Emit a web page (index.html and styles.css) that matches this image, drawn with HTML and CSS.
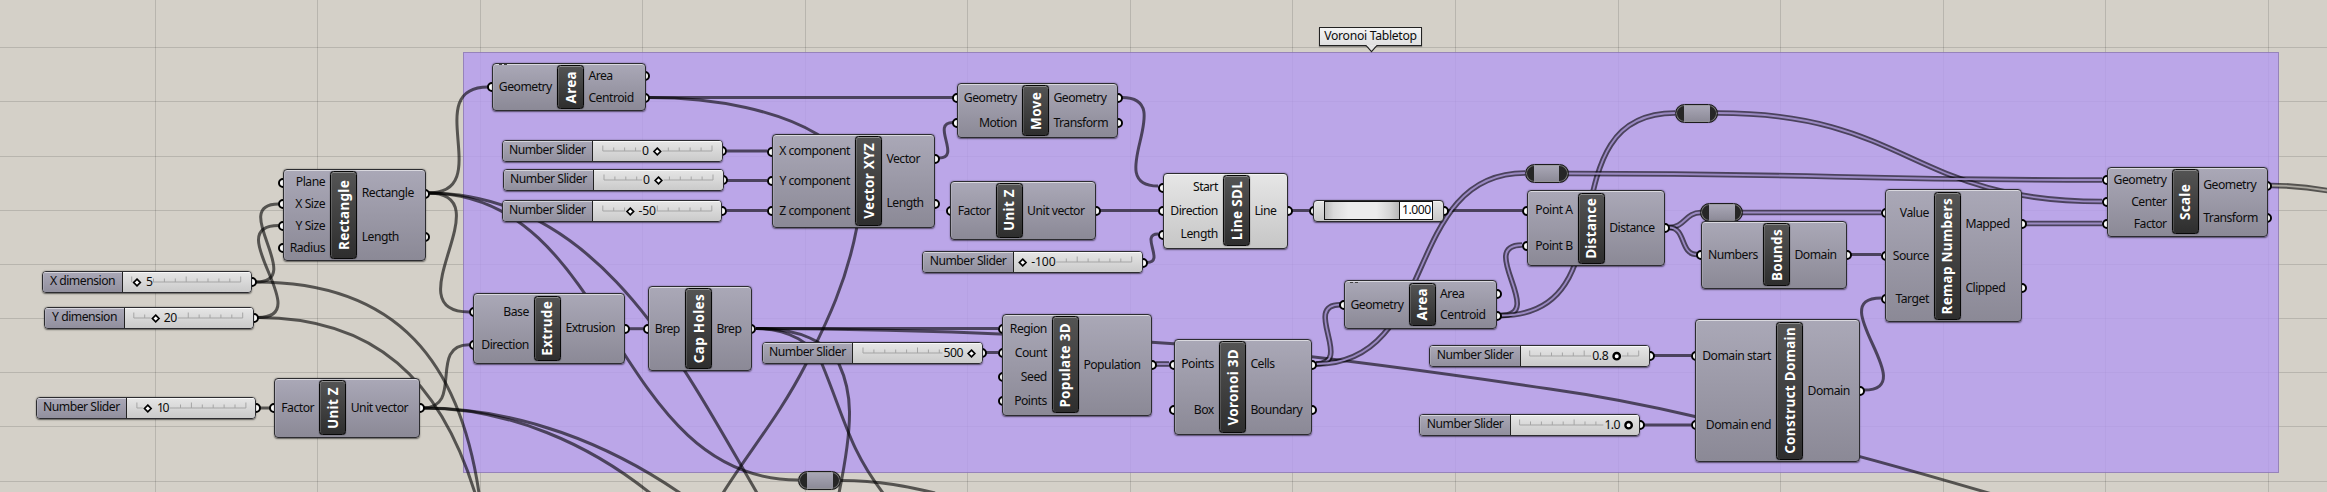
FILE: index.html
```html
<!DOCTYPE html>
<html lang="en">
<head>
<meta charset="utf-8">
<title>Voronoi Tabletop</title>
<link rel="stylesheet" href="styles.css">
</head>
<body>
<main class="canvas" id="canvas">
  <svg class="layer" id="grid" width="2327" height="492"></svg>
  <div class="group"></div>
  <svg class="layer" id="wires" width="2327" height="492"></svg>
  <div class="tag">Voronoi Tabletop
    <svg class="tag-tip" width="13" height="8" viewBox="0 0 13 8"><path d="M1 0L6.5 6.6L12 0" fill="#e4e4e4"/><path d="M.5 .6H1.2L6.5 6.6L11.8 .6H12.5" fill="none" stroke="#222" stroke-width="1.1"/><path d="M1.8 .3H11.2" stroke="#e8e8e8" stroke-width="1.6"/></svg>
  </div>
</main>
<script src="graph.js"></script>
</body>
</html>
```
FILE: styles.css
```css
body {
  margin: 0;
  background: #d4d0c8;
  overflow: hidden;
}
.canvas {
  position: relative;
  width: 2327px;
  height: 492px;
  overflow: hidden;
  font-family: "Noto Sans", "Open Sans", sans-serif;
  font-size: 12.2px;
  letter-spacing: -0.5px;
  color: #0c0c0c;
  white-space: nowrap;
}
.layer { position: absolute; left: 0; top: 0; }
.grid-line { stroke: rgba(0, 0, 0, 0.13); stroke-width: 1; }
.group {
  position: absolute;
  left: 462.5px;
  top: 52px;
  width: 1816px;
  height: 421px;
  box-sizing: border-box;
  background: rgba(182, 156, 239, 0.82);
  border: 1px solid rgba(70, 60, 90, 0.32);
}
.wire { fill: none; stroke: rgba(0, 0, 0, 0.6); stroke-width: 3; }
.wire-list { fill: none; stroke: rgba(0, 0, 0, 0.6); stroke-width: 5.6; }
.wire-core { fill: none; stroke: #9a89c2; stroke-width: 1.8; }
.wire-core.plain { stroke: #aaa7a0; }

.tag {
  position: absolute;
  left: 1319px;
  top: 27px;
  width: 101px;
  height: 17px;
  border: 1px solid #222;
  background: linear-gradient(#f4f4f4, #e0e0e0);
  box-shadow: 0 1px 1px rgba(0, 0, 0, 0.35);
  line-height: 16px;
  letter-spacing: -0.3px;
  text-align: center;
}
.tag-tip { position: absolute; left: 45px; top: 17px; }

.item { position: absolute; }
.port {
  position: absolute;
  width: 6px;
  height: 6px;
  border: 2px solid #000;
  border-radius: 50%;
  background: #fff;
}
.port.in { left: -4.7px; top: calc(50% - 4.7px); }
.port.out { right: -4.7px; top: calc(50% - 4.7px); }

.body {
  position: absolute;
  inset: 0;
  box-sizing: border-box;
  border: 1px solid #2c2c30;
  border-radius: 4px;
  background: linear-gradient(#aaa8b7, #8b8996);
  box-shadow: inset 0 1px 0 rgba(255, 255, 255, 0.55), inset 1px 0 0 rgba(255, 255, 255, 0.15),
    0 0.5px 1.5px rgba(0, 0, 0, 0.55);
}
.light .body { background: linear-gradient(#e6e6e6, #c6c6c6); }
.columns {
  position: relative;
  display: flex;
  height: 100%;
  box-sizing: border-box;
  padding: 2.4px 0;
}
.column { display: flex; flex-direction: column; }
.column.inputs { align-items: stretch; text-align: right; }
.column.outputs { flex: 1; }
.row { flex: 1; display: flex; align-items: center; }
.row span { line-height: 14px; }
.inputs .row { justify-content: flex-end; padding-right: 5.2px; }
.outputs .row { padding-left: 4.4px; }
.title {
  width: 27px;
  box-sizing: border-box;
  flex: none;
  display: flex;
  align-items: center;
  justify-content: center;
  border: 1px solid #080808;
  border-radius: 3.5px;
  background: linear-gradient(#545454, #2e2e2e);
  box-shadow: inset 0 1px 0 #8c8c8c, inset 1px 0 0 rgba(255, 255, 255, 0.15), 0 0 1px #222;
  color: #fff;
  font-size: 13.5px;
  font-weight: 700;
  letter-spacing: 0.3px;
}
.title span { writing-mode: vertical-rl; transform: rotate(180deg); line-height: 18px; }
.mark {
  position: absolute;
  left: 6.5px;
  top: 1.5px;
  width: 8px;
  height: 1px;
  background: linear-gradient(90deg, #444 3px, transparent 3px 5px, #444 5px);
}

.slider .body { display: flex; overflow: hidden; }
.caption {
  flex: none;
  box-sizing: border-box;
  border-right: 1px solid #222;
  text-align: center;
  line-height: 18.5px;
  background: linear-gradient(#aaa8b7, #918f9d);
  box-shadow: inset 0 1px 0 rgba(255, 255, 255, 0.5), inset 1px 0 0 rgba(255, 255, 255, 0.15);
}
.track { flex: 1; background: linear-gradient(#e6e6e6, #cacaca); box-shadow: inset 0 1px 0 #f8f8f8; }
.ticks { position: absolute; left: 0; top: 0; overflow: visible; }
.tick { stroke: #a5a5a5; stroke-width: 1; fill: none; }
.knob { fill: #fff; stroke: #000; stroke-width: 1.7; }
.knob.round { stroke-width: 2.4; }
.value { fill: #0c0c0c; }

.relay {
  box-sizing: border-box;
  width: 43.5px;
  height: 18.5px;
  border: 1px solid #1c1c1c;
  border-radius: 9.5px;
  background: linear-gradient(90deg, #262626 8px, transparent 8px 33.5px, #262626 33.5px),
    linear-gradient(#aaa8b7, #8b8996);
  box-shadow: inset 0 0 0 1px rgba(150, 150, 150, 0.7), 0 0 1px rgba(0, 0, 0, 0.5);
}

.falloff {
  position: absolute;
  left: 10px;
  top: 0.5px;
  width: 109px;
  height: 19px;
  box-sizing: border-box;
  display: flex;
  justify-content: flex-end;
  border: 1px solid #111;
  background: linear-gradient(90deg, #bbb, #dadada 8%, #ececec 22%, #ececec 48%, #d6d6d6 60%, #b4b4b4 70%);
}
.readout {
  width: 33px;
  box-sizing: border-box;
  border-left: 1px solid #111;
  background: #fff;
  text-align: center;
  line-height: 15px;
}
```
FILE: graph.js
```js
const SVG = 'http://www.w3.org/2000/svg';
const canvas = document.getElementById('canvas');

function svg(parent, name, attrs, text) {
  const el = document.createElementNS(SVG, name);
  for (const key in attrs) el.setAttribute(key, attrs[key]);
  if (text) el.textContent = text;
  parent.appendChild(el);
  return el;
}
function div(parent, cls, text, tag) {
  const el = document.createElement(tag || 'div');
  el.className = cls;
  if (text) el.textContent = text;
  parent.appendChild(el);
  return el;
}
function place(el, x, y, w, h) {
  el.style.left = x + 'px';
  el.style.top = y + 'px';
  if (w) { el.style.width = w + 'px'; el.style.height = h + 'px'; }
}

// Grid
const grid = document.getElementById('grid');
[155, 317, 480, 642, 805, 967, 1130, 1292, 1455, 1618, 1780, 1943, 2105, 2268].forEach(x =>
  svg(grid, 'path', { class: 'grid-line', d: `M${x + .5} 0V492` }));
[47, 101, 156, 210, 264, 318, 372, 426, 481].forEach(y =>
  svg(grid, 'path', { class: 'grid-line', d: `M0 ${y + .5}H2327` }));

// Wires: [x1, y1, x2, y2]
const wires = document.getElementById('wires');
function curve([x1, y1, x2, y2]) {
  const c = Math.max(Math.abs(x2 - x1) / 2, Math.abs(y2 - y1) * .65);
  return `M${x1} ${y1}C${x1 + c} ${y1} ${x2 - c} ${y2} ${x2} ${y2}`;
}
[
  [256, 282, 278.5, 204], [258, 317.5, 278.5, 225.5], [260, 408, 270, 408],
  [423, 408, 469, 344.7], [428, 193, 488, 87], [428, 193, 469, 312],
  [428, 193, 798, 480], [649, 97.5, 953, 97.5],
  [727, 151, 767, 151], [727, 180.5, 767, 180.5], [727, 210.5, 767, 210.5],
  [939, 158, 953, 122.5], [1122, 97.5, 1158, 186], [1100, 210.5, 1158, 210.5],
  [1147, 262.5, 1158, 234], [628, 328.7, 643, 328.7], [756, 328.5, 998, 328.5],
  [986, 352.5, 998, 352.5], [1292, 210.5, 1309, 210.5], [1448, 210.5, 1522, 210.5],
  [1654, 355.5, 1691, 355.5], [1644, 425, 1691, 425],
  [1851, 254.5, 1881, 254.5], [1864, 390, 1881, 298]
].map(curve).concat([
  'M256 282C400 282 460 365 479 493',
  'M258 317.5C375 317.5 440 380 475 493',
  'M423 408C520 408 610 445 680 493',
  'M423 408C510 408 590 445 650 493',
  'M428 193C600 193 685 370 757 493',
  'M649 97.5C720 97.5 780 112 817 134C855 156 866 190 856.7 228C845 290 820 335 806 364C780 415 750 450 723 493',
  'M756 328.5C900 328.5 1060 336 1174 343.7C1250 348 1400 367 1550 389C1600 396 1650 406 1695 416.5C1760 430 1860 455 1992 494',
  'M756 328.5C790 328.5 813 344 822 364C845 420 850 450 883 493',
  'M756 328.5C800 328.5 828 342 839 364C852 392 854 420 839 493',
  'M841 480.5C880 480.5 910 487 935 493'
]).forEach(d => svg(wires, 'path', { class: 'wire', d }));

[
  [1156, 364, 1169, 364], [1316, 364, 1340, 304.7], [1316, 364, 1525, 173],
  [1501, 315.5, 1522, 245], [1501, 315.5, 1675, 113], [1717, 113, 2102, 201.5],
  [1568, 173.5, 2102, 180], [1669, 227.5, 1701, 212.5], [1669, 227.5, 1697, 254.5],
  [1742, 212.5, 1881, 212.5], [2026, 223.5, 2102, 223.5]
].map(curve).forEach(d => {
  svg(wires, 'path', { class: 'wire-list', d });
  svg(wires, 'path', { class: 'wire-core', d });
});
const exit = 'M2271 185.5C2295 185.5 2315 188 2332 191.5';
svg(wires, 'path', { class: 'wire-list', d: exit });
svg(wires, 'path', { class: 'wire-core plain', d: exit });

// Relays
[[1674.5, 104], [1525, 164], [1699.7, 203], [797.7, 471]].forEach(([x, y]) =>
  place(div(canvas, 'item relay'), x, y));

// Components: x, y, right, bottom, title x, title, inputs, outputs
[
  [283, 169, 425.5, 261, 330.3, 'Rectangle', ['Plane', 'X Size', 'Y Size', 'Radius'], ['Rectangle', 'Length']],
  [274, 378, 420, 437.5, 319.3, 'Unit Z', ['Factor'], ['Unit vector']],
  [492, 62.5, 645.5, 111, 557, 'Area', ['Geometry'], ['Area', 'Centroid'], 'mark'],
  [771.5, 134, 935, 228, 855, 'Vector XYZ', ['X component', 'Y component', 'Z component'], ['Vector', 'Length']],
  [957, 83, 1118, 138, 1022, 'Move', ['Geometry', 'Motion'], ['Geometry', 'Transform']],
  [950.3, 181, 1096.5, 240, 995.7, 'Unit Z', ['Factor'], ['Unit vector']],
  [1163, 173, 1288, 248.7, 1223, 'Line SDL', ['Start', 'Direction', 'Length'], ['Line'], 'light'],
  [473.3, 293.3, 625, 363.7, 534, 'Extrude', ['Base', 'Direction'], ['Extrusion']],
  [648, 286, 751.7, 371, 685, 'Cap Holes', ['Brep'], ['Brep']],
  [1002.3, 314, 1152.5, 415.7, 1052, 'Populate 3D', ['Region', 'Count', 'Seed', 'Points'], ['Population']],
  [1173.5, 339, 1312, 435, 1219, 'Voronoi 3D', ['Points', 'Box'], ['Cells', 'Boundary']],
  [1343.5, 280.3, 1497.2, 328.8, 1408.7, 'Area', ['Geometry'], ['Area', 'Centroid'], 'mark'],
  [1527, 190.3, 1665, 266, 1577.8, 'Distance', ['Point A', 'Point B'], ['Distance']],
  [1701, 221, 1847.3, 288.8, 1763, 'Bounds', ['Numbers'], ['Domain']],
  [1885.3, 189.3, 2022, 322.5, 1934, 'Remap Numbers', ['Value', 'Source', 'Target'], ['Mapped', 'Clipped']],
  [1695.2, 319.3, 1860, 462, 1776.2, 'Construct Domain', ['Domain start', 'Domain end'], ['Domain']],
  [2106.6, 166.5, 2267.8, 236.8, 2171.8, 'Scale', ['Geometry', 'Center', 'Factor'], ['Geometry', 'Transform']]
].forEach(([x, y, r, b, tx, name, ins, outs, kind]) => {
  const node = div(canvas, 'item node ' + (kind === 'light' ? 'light' : ''));
  place(node, x, y, r - x, b - y);
  const inner = b - y - 4.8;
  const port = (side, i, n) => {
    div(node, 'port ' + side).style.top = (2.4 + inner * (i + .5) / n - 4.7) + 'px';
  };
  ins.forEach((_, i) => port('in', i, ins.length));
  outs.forEach((_, i) => port('out', i, outs.length));
  div(node, 'body');
  if (kind === 'mark') div(node, 'mark');
  const columns = div(node, 'columns');
  const left = div(columns, 'column inputs');
  left.style.width = (tx - x) + 'px';
  ins.forEach(t => div(div(left, 'row'), '', t, 'span'));
  div(div(columns, 'title'), '', name, 'span');
  const right = div(columns, 'column outputs');
  outs.forEach(t => div(div(right, 'row'), '', t, 'span'));
});

// Sliders: x, y, right, split x, caption, value, value x, value width, knob x, knob shape
[
  [42.3, 270.5, 252, 121.7, 'X dimension', '5', 146.3, 6, 137.3],
  [44.3, 306.5, 254, 123.8, 'Y dimension', '20', 164, 13, 156],
  [35.6, 396.5, 256.5, 126.2, 'Number Slider', '10', 156.5, 12, 147.4],
  [501.5, 139.8, 722.5, 592, 'Number Slider', '0', 641.6, 6.5, 656.8],
  [502.5, 169.2, 723.5, 593.2, 'Number Slider', '0', 642.6, 6.5, 658],
  [501.5, 199.5, 722.3, 592, 'Number Slider', '-50', 638, 17, 629.8],
  [922.3, 251.3, 1143, 1012.7, 'Number Slider', '-100', 1031.5, 24, 1023],
  [761.5, 341.5, 982.5, 852.2, 'Number Slider', '500', 943, 19.5, 971],
  [1429.3, 344.5, 1650, 1519.7, 'Number Slider', '0.8', 1592.5, 16, 1617, 'round'],
  [1419.4, 414, 1640, 1509.7, 'Number Slider', '1.0', 1604.8, 15.5, 1629, 'round']
].forEach(([x, y, r, split, caption, value, vx, vw, knob, shape]) => {
  const node = div(canvas, 'item slider');
  place(node, x, y, r - x, 22);
  div(node, 'port out');
  const body = div(node, 'body');
  div(body, 'caption', caption).style.width = (split - x) + 'px';
  div(body, 'track');
  const s = svg(node, 'svg', { class: 'ticks', width: r - x, height: 22 });
  const from = split + 10.3 - x, to = r - 11 - x;
  const gapA = Math.min(knob - 4, vx) - x - 1, gapB = Math.max(knob + 4, vx + vw) - x + 1;
  let d = '';
  if (gapA > from) d += `M${from} 11H${gapA}`;
  if (gapB < to) d += `M${gapB} 11H${to}`;
  for (let i = 0; i <= 10; i++) {
    const tx = from + (to - from) * i / 10;
    if (tx < gapA || tx > gapB) d += `M${tx} 11V${i % 5 ? 7.5 : 5.5}`;
  }
  svg(s, 'path', { class: 'tick', d });
  if (shape) svg(s, 'circle', { class: 'knob round', cx: knob - x, cy: 11.2, r: 3.2 });
  else svg(s, 'path', { class: 'knob', d: `M${knob - x} 8.2l3.3 3.3l-3.3 3.3l-3.3 -3.3z` });
  svg(s, 'text', { class: 'value', x: vx - x, y: 14.6, textLength: vw }, value);
});

// Falloff display
const graph = div(canvas, 'item light');
place(graph, 1313.3, 199.5, 131, 22);
div(graph, 'port in');
div(graph, 'port out');
const face = div(div(graph, 'body'), 'falloff');
div(face, 'readout', '1.000');
```
